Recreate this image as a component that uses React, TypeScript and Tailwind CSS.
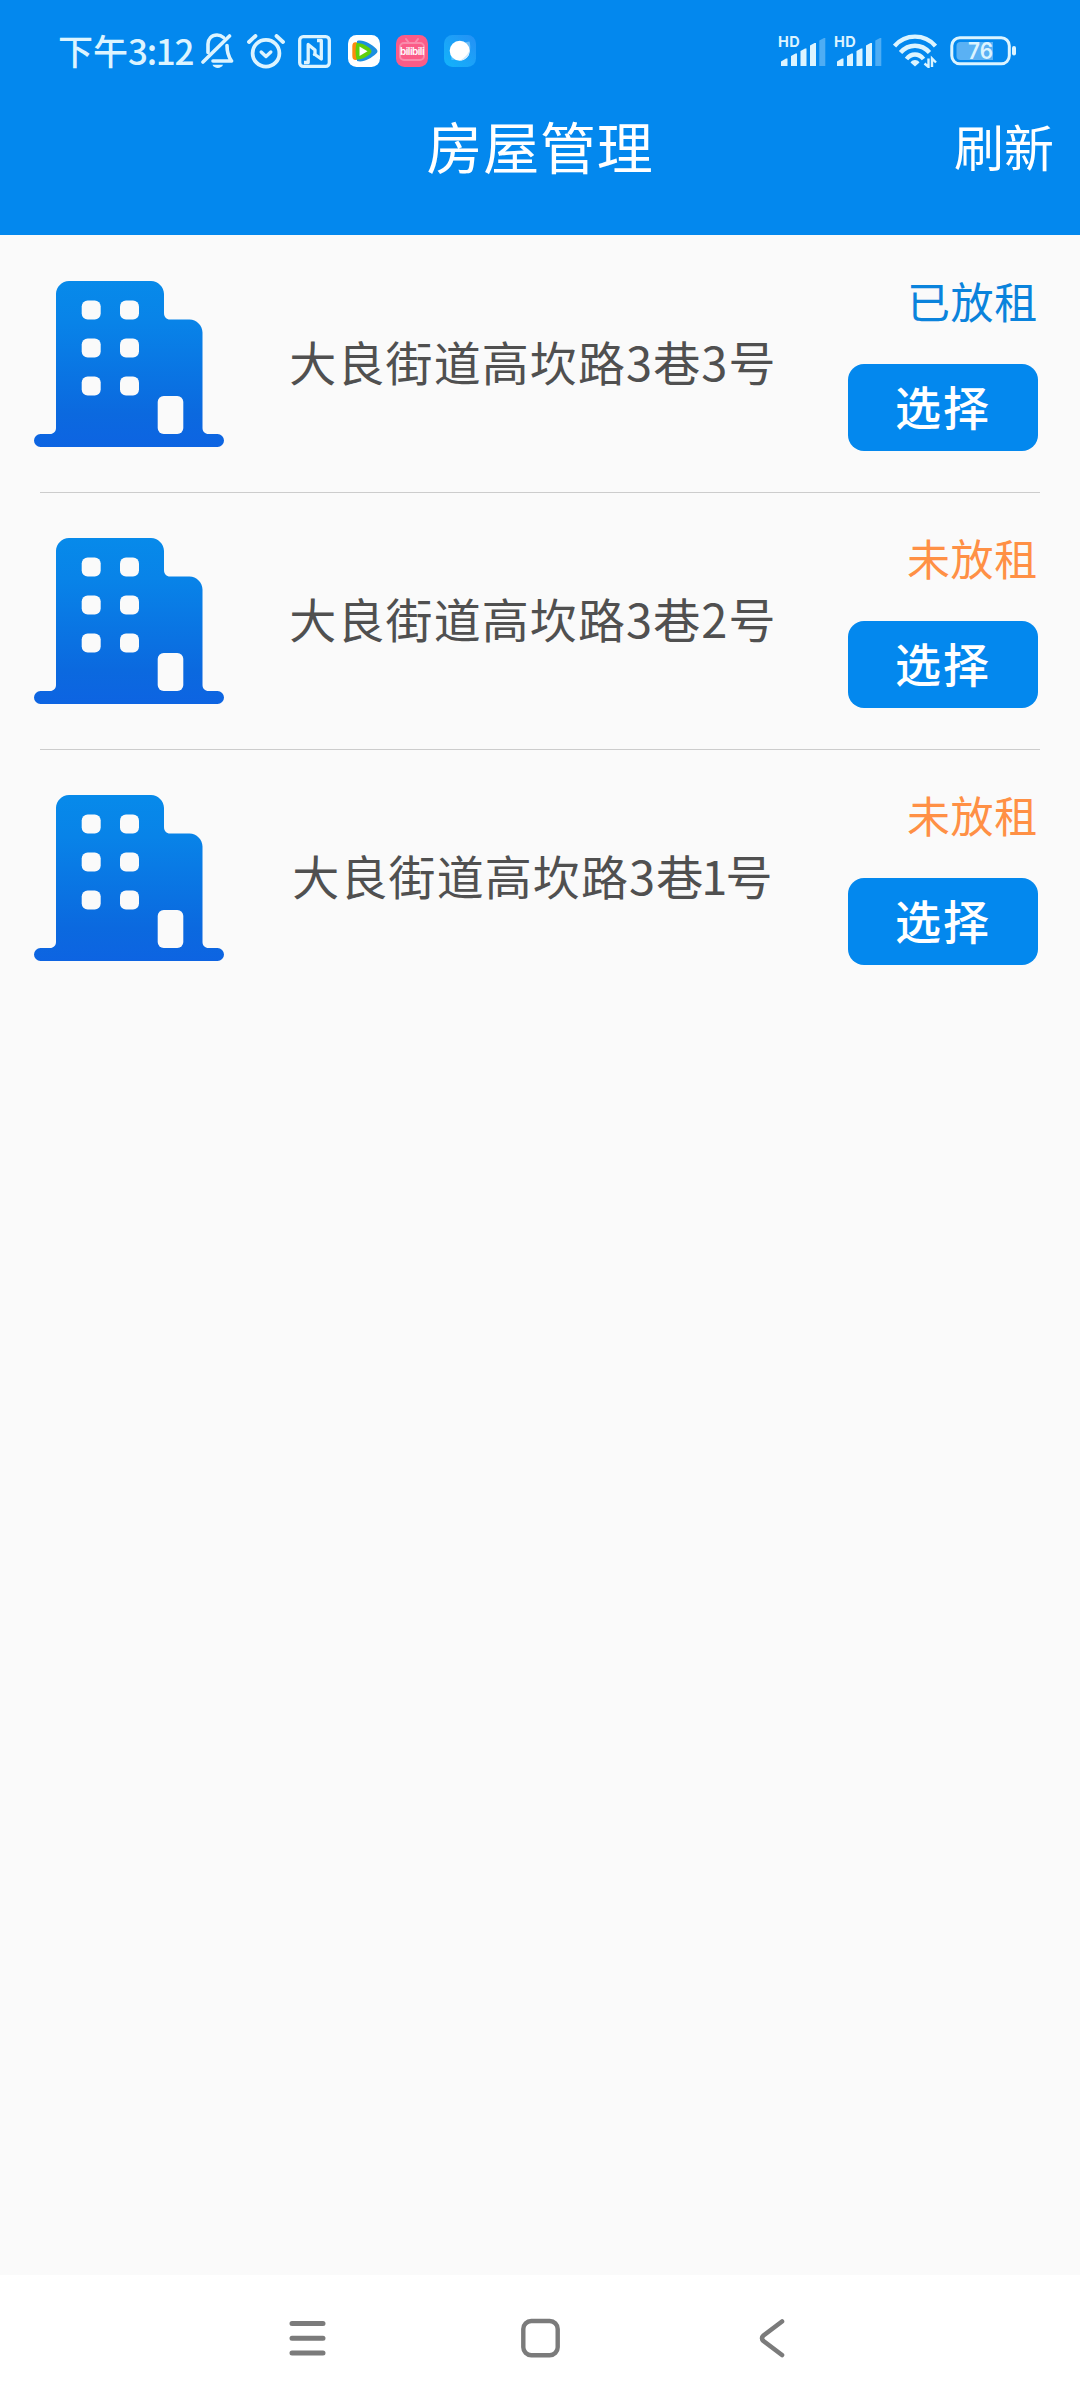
interface House {
  id: number;
  address: string;
  rented: boolean;
}

const houses: House[] = [
  { id: 3, address: "大良街道高坎路3巷3号", rented: true },
  { id: 2, address: "大良街道高坎路3巷2号", rented: false },
  { id: 1, address: "大良街道高坎路3巷1号", rented: false },
];

function BellOffIcon() {
  return (
    <svg width="33" height="36" viewBox="0 0 33 36" fill="none" stroke="currentColor" strokeWidth="3.6" strokeLinecap="round" strokeLinejoin="round">
      <path d="M22.500 4.500C20.500 2.800 18.500 2 16 2C10.500 2 7 6 7 11V19.500" />
      <path d="M26 12.500C26 19 27 23 30.500 28H12" />
      <path d="M2 29L28.500 3" />
      <path d="M11.500 31.800H22C20.500 36 13 36 11.500 31.800Z" fill="currentColor" stroke="none" />
    </svg>
  );
}

function AlarmIcon() {
  return (
    <svg width="38" height="35" viewBox="0 0 38 35" fill="none" stroke="currentColor" strokeLinecap="round" strokeLinejoin="round">
      <circle cx="19" cy="19.200" r="13.400" strokeWidth="3.800" />
      <path d="M2 8L8.500 2M36 8L29.500 2" strokeWidth="3.800" />
      <path d="M14.200 18L19 22.500L23.800 18" strokeWidth="3.400" />
    </svg>
  );
}

function NfcIcon() {
  return (
    <svg width="33" height="33" viewBox="0 0 33 33" fill="none" stroke="currentColor" strokeWidth="3.300">
      <rect x="1.700" y="1.700" width="29.600" height="29.600" rx="3.500" />
      <path d="M6 27.500H10.200V9.500L17 15V21" strokeLinejoin="round" />
      <path d="M15.500 18.500L23.300 24V5.500H19" strokeLinejoin="round" />
    </svg>
  );
}

function VideoAppIcon() {
  return (
    <svg width="32" height="32" viewBox="0 0 32 32">
      <rect width="32" height="32" rx="8.500" fill="#fff" />
      <path d="M9 7.500C6 6.500 4.300 8 4.300 11V21C4.300 24 6 25.800 9 24.800Z" fill="#ff8a0c" />
      <path d="M9 6C15 4 23 9 28 13.500C30 15.500 30 17 28 18.800C23 23.500 15 28 9 26Z" fill="#1d8fe0" />
      <path d="M8.500 8C13 7.500 19 10.500 22.500 14C23.800 15.500 23.800 17 22.500 18.500C19 22 13 25 8.500 24.500C7.300 19 7.300 13 8.500 8Z" fill="#5fd00a" />
      <path d="M11.500 11.500L19.500 16.200L11.500 21Z" fill="#fff" />
    </svg>
  );
}

function BiliAppIcon() {
  return (
    <div className="relative flex size-8 items-center justify-center">
      <svg className="absolute inset-0" width="32" height="32" viewBox="0 0 32 32">
        <rect width="32" height="32" rx="8.500" fill="#fb5c88" />
        <path d="M10 4L13 8M22 4L19 8" stroke="#f98bab" strokeWidth="2" strokeLinecap="round" />
        <rect x="4" y="8" width="24" height="17" rx="4" fill="none" stroke="#f98bab" strokeWidth="2" />
      </svg>
      <span className="relative text-[10px] leading-4 font-semibold tracking-[-0.5px] text-white font-[Inter,sans-serif]">
        bilibili
      </span>
    </div>
  );
}

function BrowserAppIcon() {
  return (
    <svg width="32" height="32" viewBox="0 0 32 32">
      <defs>
        <linearGradient id="browser" x1="0" y1="1" x2="1" y2="0">
          <stop offset="0" stopColor="#12b4fb" />
          <stop offset="1" stopColor="#2590f5" />
        </linearGradient>
      </defs>
      <rect width="32" height="32" rx="8.500" fill="url(#browser)" />
      <path d="M7 20L7.500 25L13 24.500Z" fill="#59c4fd" />
      <path d="M20 7.500L25.500 6.500C26.500 10 26.500 14 25.500 17Z" fill="#6bbdf9" />
      <circle cx="15.700" cy="15.800" r="10" fill="#fff" />
      <path d="M25.700 15C25.800 20.500 22 25 16 25.800C21 22.500 24 19 25.700 15Z" fill="#cfe9fd" />
    </svg>
  );
}

function SignalIcon() {
  return (
    <div className="relative h-[31px] w-12">
      <span className="absolute -top-[3px] left-0 text-[14.5px] leading-[18px] font-bold tracking-[0.3px] font-[Inter,sans-serif]">
        HD
      </span>
      <svg className="absolute inset-0" width="48" height="30" viewBox="0 0 48 30" fill="currentColor">
        <path d="M3 30V25.500L8 22.500H9.500V30Z" />
        <path d="M13 30V20L17.500 17.500H19V30Z" />
        <path d="M22.500 30V15L27 12.500H28.500V30Z" />
        <path d="M32 30V9.500L36.500 7H38V30Z" />
        <path d="M41.300 30V4.500L46 2H47.300V30Z" opacity="0.350" />
      </svg>
    </div>
  );
}

function WifiIcon() {
  return (
    <svg width="44" height="34" viewBox="0 0 44 34" fill="none" stroke="currentColor" strokeWidth="4.400">
      <path d="M1.500 12C12.500 -0.500 31.500 -0.500 42.500 12" />
      <path d="M7.500 18.500C15.500 9.500 28.500 9.500 36.500 18.500" />
      <path d="M13.500 25C18.300 19 25.700 19 30.500 25" />
      <path d="M17.500 28.500C20 25.300 24 25.300 26.500 28.500L22 32.500Z" fill="currentColor" stroke="none" />
      <path d="M35.500 24.500V33L31.500 29.500M39 33V24.500L43 28.500" strokeWidth="2.400" />
    </svg>
  );
}

function BatteryIcon() {
  return (
    <svg width="67" height="30" viewBox="0 0 67 30" fill="none">
      <rect x="1.800" y="1.800" width="57.500" height="26" rx="8" stroke="currentColor" strokeWidth="3" />
      <path d="M10.500 6H43V24H10.500C8 24 6.500 22.500 6.500 20V10C6.500 7.500 8 6 10.500 6Z" fill="#fff" opacity="0.350" />
      <rect x="62" y="10" width="4" height="9.500" rx="2" fill="currentColor" />
      <text x="30.500" y="23" textAnchor="middle" fontSize="22.500" fontWeight="600" fontFamily="Inter, sans-serif" textLength="25" lengthAdjust="spacingAndGlyphs" fill="currentColor">
        76
      </text>
    </svg>
  );
}

function BuildingIcon() {
  return (
    <svg width="190" height="166" viewBox="0 0 190 166">
      <defs>
        <linearGradient id="building" x1="0" y1="0" x2="0" y2="1">
          <stop offset="0" stopColor="#078aea" />
          <stop offset="0.250" stopColor="#0883e8" />
          <stop offset="0.800" stopColor="#0b69df" />
          <stop offset="1" stopColor="#0d64e2" />
        </linearGradient>
      </defs>
      <path
        d="M35 0H117C124 0 130 6 130 13V32C130 36 132.500 38.500 136 38.500H155.500C162.500 38.500 168.500 44.500 168.500 51.500V147C168.500 150.500 171 153 174.500 153H183.500A6.500 6.500 0 0 1 183.500 166H6.500A6.500 6.500 0 0 1 6.500 153H16C19.500 153 22 150.500 22 147V13C22 6 28 0 35 0Z"
        fill="url(#building)"
      />
      <g fill="#fafafa">
        {[19.5, 57.5, 95.5].map((y) => (
          <g key={y}>
            <rect x="47.700" y={y} width="19" height="19" rx="6" />
            <rect x="86" y={y} width="19" height="19" rx="6" />
          </g>
        ))}
        <rect x="123.700" y="115" width="25.600" height="38" rx="6" />
      </g>
    </svg>
  );
}

function StatusBar() {
  return (
    <div className="flex h-[100px] items-center justify-between pt-0.5 pl-[58px] pr-[63px] text-[#dcf4ff]">
      <div className="flex items-center">
        <span className="w-[143px] whitespace-nowrap pb-[3px] text-[35px] font-medium leading-none">
          下午<span className="tracking-[-1.3px]">3:12</span>
        </span>
        <div className="flex items-center gap-4">
          <div className="mr-px flex items-center gap-[13px]">
            <BellOffIcon />
            <AlarmIcon />
            <NfcIcon />
          </div>
          <VideoAppIcon />
          <BiliAppIcon />
          <BrowserAppIcon />
        </div>
      </div>
      <div className="flex items-center">
        <SignalIcon />
        <div className="ml-2">
          <SignalIcon />
        </div>
        <div className="ml-[11px] mr-[13px]">
          <WifiIcon />
        </div>
        <BatteryIcon />
      </div>
    </div>
  );
}

function HouseRow({ house }: { house: House }) {
  // "1" is narrower than the other digits
  const parts = house.address.split("1");

  return (
    <li className="mx-10 flex h-[257px] items-center border-b border-[#cccccc] last:border-transparent">
      <div className="-ml-1.5 w-[190px] shrink-0">
        <BuildingIcon />
      </div>
      <p className="flex-1 whitespace-nowrap pr-[6px] pb-2 text-center text-[47px] leading-none tracking-[1.1px] text-[#505050]">
        {parts[0]}
        {parts.length > 1 && <span className="-mx-[3px]">1</span>}
        {parts[1]}
      </p>
      <div className="mr-0.5 flex w-[190px] shrink-0 flex-col items-end pb-1.5">
        <span
          className={
            house.rented
              ? "text-[43px] leading-[58px] tracking-[0.7px] text-[#0a83dc]"
              : "text-[43px] leading-[58px] tracking-[0.7px] text-[#ff9045]"
          }
        >
          {house.rented ? "已放租" : "未放租"}
        </span>
        <button className="mt-[35px] h-[87px] w-[190px] rounded-2xl bg-[#0388ee] pb-[5px] text-[46px] font-medium leading-none tracking-[2px] text-white">
          选择
        </button>
      </div>
    </li>
  );
}

function NavBar() {
  return (
    <nav className="flex h-[125px] items-center justify-center bg-white text-[#7b7b7b]">
      <svg width="40" height="40" viewBox="0 0 40 40" stroke="currentColor" strokeWidth="5" strokeLinecap="round">
        <path d="M4 5.500H35M4 20.200H35M4 34.900H35" />
      </svg>
      <svg className="ml-[193px] mr-[192px]" width="40" height="40" viewBox="0 0 40 40" fill="none" stroke="currentColor" strokeWidth="4.400">
        <rect x="2.300" y="3" width="34.400" height="34.200" rx="8" />
      </svg>
      <svg width="40" height="40" viewBox="0 0 40 40" fill="none" stroke="currentColor" strokeWidth="4.600" strokeLinecap="round">
        <path d="M29 3.500L10.500 17.500Q7.500 20.200 10.500 23L29 37" />
      </svg>
    </nav>
  );
}

export default function App() {
  return (
    <div className="flex h-[2400px] w-[1080px] flex-col bg-[#fafafa] font-['Noto_Sans_CJK_SC',sans-serif]">
      <header className="h-[235px] bg-[#0388ee] text-white">
        <StatusBar />
        <div className="grid h-[95px] grid-cols-3 items-center px-[26px] pb-[5px]">
          <span />
          <h1 className="text-center text-[56px] leading-none tracking-[0.7px]">
            房屋管理
          </h1>
          <button className="text-right text-[50px] leading-none">刷新</button>
        </div>
      </header>
      <ul className="flex-1 pt-px">
        {houses.map((house) => (
          <HouseRow key={house.id} house={house} />
        ))}
      </ul>
      <NavBar />
    </div>
  );
}
